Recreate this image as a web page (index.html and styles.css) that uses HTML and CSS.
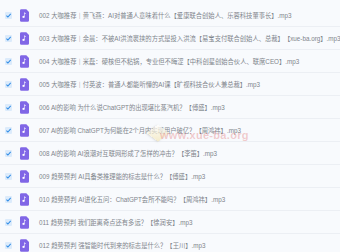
FILE: index.html
```html
<!DOCTYPE html>
<html lang="zh">
<head>
<meta charset="utf-8">
<link rel="stylesheet" href="styles.css">
</head>
<body>
<div class="list">
  <div class="row"><span class="cb"><svg viewBox="0 0 8 8"><path d="M1.6 4.1 L3.3 5.7 L6.5 2.2" /></svg></span><span class="file"><svg viewBox="0 0 10 14"><path class="pg" d="M1.5 0 H7 L10 3 V12.5 A1.5 1.5 0 0 1 8.5 14 H1.5 A1.5 1.5 0 0 1 0 12.5 V1.5 A1.5 1.5 0 0 1 1.5 0 Z"/><path class="nt" d="M5.2 3.6 V8.6 A1.3 1.1 0 1 1 4.6 7.6 V3.6 Z M5.2 3.6 Q6.4 4.4 6.9 5.6 Q6.2 5 5.2 4.9 Z"/></svg></span><span class="name">002 大咖推荐｜黄飞燕：AI对普通人意味着什么【爱康联合创始人、乐蓉科技董事长】.mp3</span></div>
  <div class="row"><span class="cb"><svg viewBox="0 0 8 8"><path d="M1.6 4.1 L3.3 5.7 L6.5 2.2" /></svg></span><span class="file"><svg viewBox="0 0 10 14"><path class="pg" d="M1.5 0 H7 L10 3 V12.5 A1.5 1.5 0 0 1 8.5 14 H1.5 A1.5 1.5 0 0 1 0 12.5 V1.5 A1.5 1.5 0 0 1 1.5 0 Z"/><path class="nt" d="M5.2 3.6 V8.6 A1.3 1.1 0 1 1 4.6 7.6 V3.6 Z M5.2 3.6 Q6.4 4.4 6.9 5.6 Q6.2 5 5.2 4.9 Z"/></svg></span><span class="name">003 大咖推荐｜余晨：不被AI洪流裹挟的方式是投入洪流【易宝支付联合创始人、总裁】【xue-ba.org】.mp3</span></div>
  <div class="row"><span class="cb"><svg viewBox="0 0 8 8"><path d="M1.6 4.1 L3.3 5.7 L6.5 2.2" /></svg></span><span class="file"><svg viewBox="0 0 10 14"><path class="pg" d="M1.5 0 H7 L10 3 V12.5 A1.5 1.5 0 0 1 8.5 14 H1.5 A1.5 1.5 0 0 1 0 12.5 V1.5 A1.5 1.5 0 0 1 1.5 0 Z"/><path class="nt" d="M5.2 3.6 V8.6 A1.3 1.1 0 1 1 4.6 7.6 V3.6 Z M5.2 3.6 Q6.4 4.4 6.9 5.6 Q6.2 5 5.2 4.9 Z"/></svg></span><span class="name">004 大咖推荐｜米磊：硬核但不粘锅，专业但不晦涩【中科创星创始合伙人、联席CEO】.mp3</span></div>
  <div class="row"><span class="cb"><svg viewBox="0 0 8 8"><path d="M1.6 4.1 L3.3 5.7 L6.5 2.2" /></svg></span><span class="file"><svg viewBox="0 0 10 14"><path class="pg" d="M1.5 0 H7 L10 3 V12.5 A1.5 1.5 0 0 1 8.5 14 H1.5 A1.5 1.5 0 0 1 0 12.5 V1.5 A1.5 1.5 0 0 1 1.5 0 Z"/><path class="nt" d="M5.2 3.6 V8.6 A1.3 1.1 0 1 1 4.6 7.6 V3.6 Z M5.2 3.6 Q6.4 4.4 6.9 5.6 Q6.2 5 5.2 4.9 Z"/></svg></span><span class="name">005 大咖推荐｜付英波：普通人都能听懂的AI课【旷视科技合伙人兼总裁】.mp3</span></div>
  <div class="row"><span class="cb"><svg viewBox="0 0 8 8"><path d="M1.6 4.1 L3.3 5.7 L6.5 2.2" /></svg></span><span class="file"><svg viewBox="0 0 10 14"><path class="pg" d="M1.5 0 H7 L10 3 V12.5 A1.5 1.5 0 0 1 8.5 14 H1.5 A1.5 1.5 0 0 1 0 12.5 V1.5 A1.5 1.5 0 0 1 1.5 0 Z"/><path class="nt" d="M5.2 3.6 V8.6 A1.3 1.1 0 1 1 4.6 7.6 V3.6 Z M5.2 3.6 Q6.4 4.4 6.9 5.6 Q6.2 5 5.2 4.9 Z"/></svg></span><span class="name">006 AI的影响 为什么说ChatGPT的出现堪比蒸汽机？【傅盛】.mp3</span></div>
  <div class="row"><span class="cb"><svg viewBox="0 0 8 8"><path d="M1.6 4.1 L3.3 5.7 L6.5 2.2" /></svg></span><span class="file"><svg viewBox="0 0 10 14"><path class="pg" d="M1.5 0 H7 L10 3 V12.5 A1.5 1.5 0 0 1 8.5 14 H1.5 A1.5 1.5 0 0 1 0 12.5 V1.5 A1.5 1.5 0 0 1 1.5 0 Z"/><path class="nt" d="M5.2 3.6 V8.6 A1.3 1.1 0 1 1 4.6 7.6 V3.6 Z M5.2 3.6 Q6.4 4.4 6.9 5.6 Q6.2 5 5.2 4.9 Z"/></svg></span><span class="name">007 AI的影响 ChatGPT为何能在2个月内实现用户破亿？【周鸿祎】.mp3</span></div>
  <div class="row"><span class="cb"><svg viewBox="0 0 8 8"><path d="M1.6 4.1 L3.3 5.7 L6.5 2.2" /></svg></span><span class="file"><svg viewBox="0 0 10 14"><path class="pg" d="M1.5 0 H7 L10 3 V12.5 A1.5 1.5 0 0 1 8.5 14 H1.5 A1.5 1.5 0 0 1 0 12.5 V1.5 A1.5 1.5 0 0 1 1.5 0 Z"/><path class="nt" d="M5.2 3.6 V8.6 A1.3 1.1 0 1 1 4.6 7.6 V3.6 Z M5.2 3.6 Q6.4 4.4 6.9 5.6 Q6.2 5 5.2 4.9 Z"/></svg></span><span class="name">008 AI的影响 AI浪潮对互联网形成了怎样的冲击？【李笛】.mp3</span></div>
  <div class="row"><span class="cb"><svg viewBox="0 0 8 8"><path d="M1.6 4.1 L3.3 5.7 L6.5 2.2" /></svg></span><span class="file"><svg viewBox="0 0 10 14"><path class="pg" d="M1.5 0 H7 L10 3 V12.5 A1.5 1.5 0 0 1 8.5 14 H1.5 A1.5 1.5 0 0 1 0 12.5 V1.5 A1.5 1.5 0 0 1 1.5 0 Z"/><path class="nt" d="M5.2 3.6 V8.6 A1.3 1.1 0 1 1 4.6 7.6 V3.6 Z M5.2 3.6 Q6.4 4.4 6.9 5.6 Q6.2 5 5.2 4.9 Z"/></svg></span><span class="name">009 趋势预判 AI具备类推理能的标志是什么？【傅盛】.mp3</span></div>
  <div class="row"><span class="cb"><svg viewBox="0 0 8 8"><path d="M1.6 4.1 L3.3 5.7 L6.5 2.2" /></svg></span><span class="file"><svg viewBox="0 0 10 14"><path class="pg" d="M1.5 0 H7 L10 3 V12.5 A1.5 1.5 0 0 1 8.5 14 H1.5 A1.5 1.5 0 0 1 0 12.5 V1.5 A1.5 1.5 0 0 1 1.5 0 Z"/><path class="nt" d="M5.2 3.6 V8.6 A1.3 1.1 0 1 1 4.6 7.6 V3.6 Z M5.2 3.6 Q6.4 4.4 6.9 5.6 Q6.2 5 5.2 4.9 Z"/></svg></span><span class="name">010 趋势预判 AI进化五问：ChatGPT会所不能吗？【周鸿祎】.mp3</span></div>
  <div class="row"><span class="cb"><svg viewBox="0 0 8 8"><path d="M1.6 4.1 L3.3 5.7 L6.5 2.2" /></svg></span><span class="file"><svg viewBox="0 0 10 14"><path class="pg" d="M1.5 0 H7 L10 3 V12.5 A1.5 1.5 0 0 1 8.5 14 H1.5 A1.5 1.5 0 0 1 0 12.5 V1.5 A1.5 1.5 0 0 1 1.5 0 Z"/><path class="nt" d="M5.2 3.6 V8.6 A1.3 1.1 0 1 1 4.6 7.6 V3.6 Z M5.2 3.6 Q6.4 4.4 6.9 5.6 Q6.2 5 5.2 4.9 Z"/></svg></span><span class="name">011 趋势预判 我们距离奇点还有多远？【徐润安】.mp3</span></div>
  <div class="row"><span class="cb"><svg viewBox="0 0 8 8"><path d="M1.6 4.1 L3.3 5.7 L6.5 2.2" /></svg></span><span class="file"><svg viewBox="0 0 10 14"><path class="pg" d="M1.5 0 H7 L10 3 V12.5 A1.5 1.5 0 0 1 8.5 14 H1.5 A1.5 1.5 0 0 1 0 12.5 V1.5 A1.5 1.5 0 0 1 1.5 0 Z"/><path class="nt" d="M5.2 3.6 V8.6 A1.3 1.1 0 1 1 4.6 7.6 V3.6 Z M5.2 3.6 Q6.4 4.4 6.9 5.6 Q6.2 5 5.2 4.9 Z"/></svg></span><span class="name">012 趋势预判 强智能时代到来的标志是什么？【王川】.mp3</span></div>
</div>
<div class="logo"></div>
<div class="wm">www.xue-ba.org</div>
</body>
</html>
```
FILE: styles.css
```css
html, body {
  margin: 0;
  padding: 0;
  background: #f8fafd;
  overflow: hidden;
}
body {
  width: 340px;
  height: 252px;
  position: relative;
  font-family: "Liberation Sans", "Noto Sans CJK SC", sans-serif;
  color: #80858c;
}
.list {
  padding-top: 4px;
}
.row {
  height: 22px;
  border-bottom: 1px solid #eceff4;
  display: flex;
  align-items: center;
  padding-left: 5px;
}
.cb {
  width: 7px;
  height: 7px;
  background: #dcebfb;
  border-radius: 1px;
  flex: none;
  display: flex;
}
.cb svg {
  width: 7px;
  height: 7px;
}
.cb path {
  fill: none;
  stroke: #2f8ce6;
  stroke-width: 1.2;
}
.file {
  margin-left: 8px;
  width: 9px;
  height: 13px;
  flex: none;
  display: flex;
}
.file svg {
  width: 9px;
  height: 13px;
}
.pg {
  fill: #8066e6;
}
.nt {
  fill: #ffffff;
}
.name {
  margin-left: 10px;
  font-size: 6.3px;
  white-space: nowrap;
  text-spacing-trim: space-all;
}
.logo {
  position: absolute;
  left: 151px;
  top: 126px;
  width: 14px;
  height: 14px;
  transform: rotate(45deg) skew(-8deg, -8deg);
  background: linear-gradient(135deg, rgba(255,255,255,0.8), rgba(240,220,150,0.5));
  box-shadow: 0 1px 2px rgba(160,160,160,0.35);
  pointer-events: none;
}
.wm {
  position: absolute;
  left: 160px;
  top: 129px;
  font-family: "Liberation Sans", sans-serif;
  font-weight: bold;
  font-size: 11px;
  letter-spacing: 0.3px;
  color: rgba(225, 100, 100, 0.32);
  pointer-events: none;
}
```
